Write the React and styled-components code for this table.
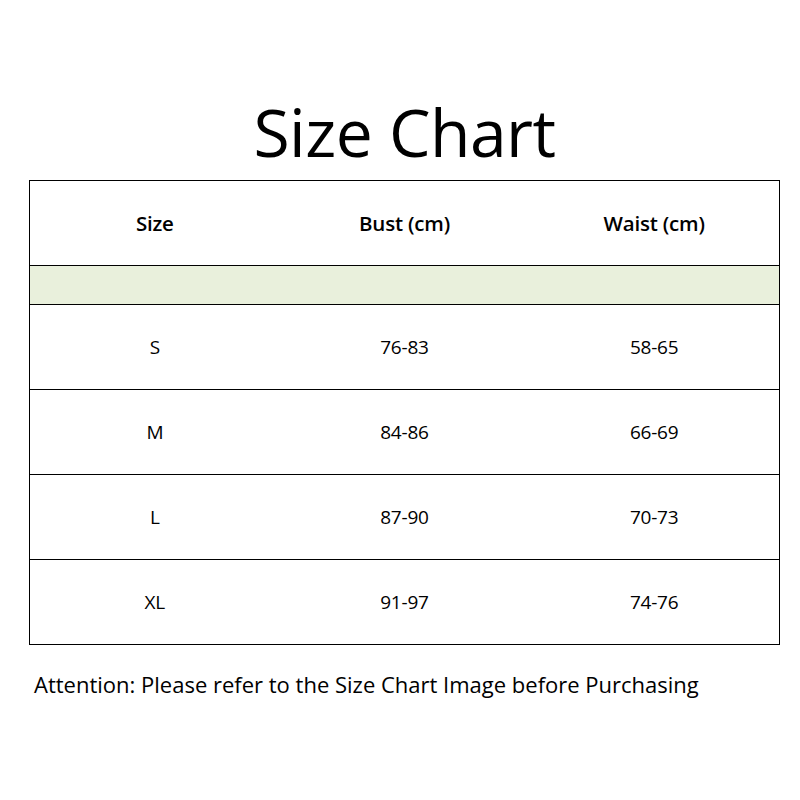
import styled, { createGlobalStyle } from "styled-components";

const GlobalStyle = createGlobalStyle`
    html, body {
        margin: 0;
        padding: 0;
        background: #fff;
    }
    body {
        font-family: "Open Sans", "Noto Sans", sans-serif;
        color: #000;
    }
`

const Page = styled.div`
    width: 800px;
    height: 800px;
    box-sizing: border-box;
    padding: 96px 20px 0 29px;
`

const Title = styled.h1`
    margin: 0;
    height: 84px;
    font-size: 66px;
    font-weight: 400;
    line-height: 70px;
    text-align: center;
    letter-spacing: -0.5px;
`

const Table = styled.div`
    border: 1px solid #000;
    display: flex;
    flex-direction: column;
`

const Row = styled.div`
    display: grid;
    grid-template-columns: repeat(3, 1fr);
    align-items: center;
    height: ${(p) => p.$height}px;
    background: ${(p) => p.$bg || "transparent"};
    border-top: ${(p) => (p.$first ? "none" : "1px solid #000")};
`

const Cell = styled.div`
    text-align: center;
    font-size: ${(p) => (p.$head ? "20.5px" : "19px")};
    font-weight: ${(p) => (p.$head ? 600 : 400)};
    letter-spacing: -0.2px;
`

const Note = styled.p`
    margin: 24px 0 0 5px;
    font-size: 22px;
`

const rows = [
    ["S", "76-83", "58-65"],
    ["M", "84-86", "66-69"],
    ["L", "87-90", "70-73"],
    ["XL", "91-97", "74-76"],
]

export default function App() {
    return (
        <>
            <GlobalStyle />
            <Page>
                <Title>Size Chart</Title>
                <Table>
                    <Row $height={84} $first>
                        <Cell $head>Size</Cell>
                        <Cell $head>Bust (cm)</Cell>
                        <Cell $head>Waist (cm)</Cell>
                    </Row>
                    <Row $height={38} $bg="#e9f0dc" />
                    {rows.map((r) => (
                        <Row key={r[0]} $height={84}>
                            {r.map((v, i) => (
                                <Cell key={i}>{v}</Cell>
                            ))}
                        </Row>
                    ))}
                </Table>
                <Note>Attention: Please refer to the Size Chart Image before Purchasing</Note>
            </Page>
        </>
    )
}
